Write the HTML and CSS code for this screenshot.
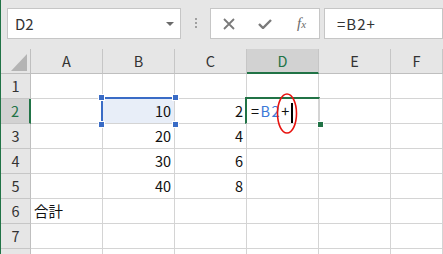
FILE: index.html
```html
<!DOCTYPE html>
<html lang="ja">
<head>
    <meta charset="UTF-8">
    <title>Excel - 合計</title>
    <link rel="stylesheet" href="styles.css">
</head>
<body>
    <div class="app">
        <!-- 数式バー -->
        <div class="toolbar">
            <div class="name-box">
                <span>D2</span>
                <span class="drop-arrow"></span>
            </div>
            <div class="grip"><i></i><i></i><i></i></div>
            <div class="buttons">
                <svg width="12" height="12" viewBox="0 0 12 12"><path d="M1 1 L11 11 M11 1 L1 11" stroke="#7a7a7a" stroke-width="1.8" fill="none"/></svg>
                <svg width="14" height="10" viewBox="0 0 14 10"><path d="M1 5 L5 9 L13 1" stroke="#7a7a7a" stroke-width="2.4" fill="none"/></svg>
                <span class="fx">f<small>x</small></span>
            </div>
            <div class="formula">=B2+</div>
        </div>

        <!-- シート -->
        <div class="sheet">
            <div class="corner"><span class="tri"></span></div>
            <div class="col-head">A</div>
            <div class="col-head">B</div>
            <div class="col-head">C</div>
            <div class="col-head active">D</div>
            <div class="col-head">E</div>
            <div class="col-head">F</div>

            <div class="row-head">1</div>
            <div class="cell"></div><div class="cell"></div><div class="cell"></div><div class="cell"></div><div class="cell"></div><div class="cell"></div>

            <div class="row-head active">2</div>
            <div class="cell"></div>
            <div class="cell num ref">10</div>
            <div class="cell num">2</div>
            <div class="cell edit">=<span class="ref-text">B2</span>+<span class="caret"></span></div>
            <div class="cell"></div><div class="cell"></div>

            <div class="row-head">3</div>
            <div class="cell"></div>
            <div class="cell num">20</div>
            <div class="cell num">4</div>
            <div class="cell"></div><div class="cell"></div><div class="cell"></div>

            <div class="row-head">4</div>
            <div class="cell"></div>
            <div class="cell num">30</div>
            <div class="cell num">6</div>
            <div class="cell"></div><div class="cell"></div><div class="cell"></div>

            <div class="row-head">5</div>
            <div class="cell"></div>
            <div class="cell num">40</div>
            <div class="cell num">8</div>
            <div class="cell"></div><div class="cell"></div><div class="cell"></div>

            <div class="row-head">6</div>
            <div class="cell">合計</div>
            <div class="cell"></div><div class="cell"></div><div class="cell"></div><div class="cell"></div><div class="cell"></div>

            <div class="row-head">7</div>
            <div class="cell"></div><div class="cell"></div><div class="cell"></div><div class="cell"></div><div class="cell"></div><div class="cell"></div>

            <!-- 8行目は上端だけ見える -->
            <div class="row-head"></div>
            <div class="cell"></div><div class="cell"></div><div class="cell"></div><div class="cell"></div><div class="cell"></div><div class="cell"></div>

            <!-- 参照範囲と選択セル -->
            <div class="ref-box">
                <i class="h tl"></i><i class="h tr"></i><i class="h bl"></i><i class="h br"></i>
            </div>
            <div class="sel-box"><i class="fill"></i></div>
            <svg class="mark" width="24" height="42" viewBox="0 0 24 42">
                <ellipse cx="11" cy="20.5" rx="9.5" ry="19.5" stroke="#e8130f" stroke-width="1.6" fill="none"/>
            </svg>
        </div>
    </div>
</body>
</html>
```

FILE: styles.css
```css
body {
    margin: 0;
    background: #fff;
    font-family: "Noto Sans CJK JP", "Noto Sans", sans-serif;
    overflow: hidden;
}

.app {
    width: 442px;
    height: 254px;
    border-left: 1px solid #217346;
    overflow: hidden;
}

.toolbar {
    display: flex;
    align-items: flex-start;
    height: 49px;
    box-sizing: border-box;
    padding: 8px 0 0 6px;
    background: #e6e6e6;
}

.name-box, .buttons, .formula {
    height: 31px;
    box-sizing: border-box;
    background: #fff;
    border: 1px solid #c6c6c6;
    display: flex;
    align-items: center;
}

.name-box {
    width: 174px;
    padding: 0 6px 0 7px;
    justify-content: space-between;
    font-size: 15px;
    color: #333;
}

.drop-arrow {
    width: 0;
    height: 0;
    border-left: 4px solid transparent;
    border-right: 4px solid transparent;
    border-top: 4px solid #6a6a6a;
    margin-top: 1px;
}

.grip {
    display: flex;
    flex-direction: column;
    gap: 2px;
    margin: 10px 13px 0 14px;
}

.grip i {
    display: block;
    width: 2px;
    height: 2px;
    background: #a0a0a0;
}

.buttons {
    width: 110px;
    padding: 0 0 0 12px;
    gap: 23px;
}

.fx {
    font-family: "Liberation Serif", serif;
    font-style: italic;
    font-size: 15px;
    color: #6a6a6a;
    margin-left: 2px;
}

.fx small {
    font-size: 11px;
}

.formula {
    flex: 1;
    margin-left: 4px;
    padding-left: 12px;
    font-size: 15px;
    letter-spacing: 1px;
    color: #333;
}

.sheet {
    position: relative;
    display: grid;
    grid-template-columns: 30px repeat(5, 72px) 1fr;
    grid-auto-rows: 25px;
    font-size: 14.5px;
}

.sheet > div {
    box-sizing: border-box;
    border-right: 1px solid #d4d4d4;
    border-bottom: 1px solid #d4d4d4;
    line-height: 24px;
    white-space: nowrap;
}

.corner {
    background: #e6e6e6;
    position: relative;
    border-color: #bfbfbf !important;
}

.tri {
    position: absolute;
    right: 3px;
    bottom: 2px;
    width: 0;
    height: 0;
    border-left: 16px solid transparent;
    border-bottom: 17px solid #b4b4b4;
}

.col-head {
    background: #e6e6e6;
    text-align: center;
    color: #333;
    border-right-color: #c6c6c6 !important;
    border-bottom-color: #bfbfbf !important;
}

.col-head.active {
    background: #d2d2d2;
    color: #217346;
    border-bottom: 2px solid #217346 !important;
}

.row-head {
    background: #e6e6e6;
    text-align: center;
    color: #333;
    border-right-color: #bfbfbf !important;
    border-bottom-color: #c6c6c6 !important;
}

.row-head.active {
    background: #d2d2d2;
    color: #217346;
    border-right: 2px solid #217346 !important;
}

.cell {
    padding: 0 3px;
    color: #111;
}

.num {
    text-align: right;
}

.ref {
    background: #e8eef8;
}

.edit {
    padding-left: 4px;
    display: flex;
    align-items: center;
    letter-spacing: 1.5px;
}

.ref-text {
    color: #3c78d8;
}

.caret {
    display: inline-block;
    width: 2px;
    height: 20px;
    margin-top: 4px;
    background: #000;
}

.ref-box {
    position: absolute;
    left: 100px;
    top: 48px;
    width: 74px;
    height: 27px;
    box-sizing: border-box;
    border: 2px solid #3a6cc6;
}

.h {
    position: absolute;
    width: 5px;
    height: 5px;
    background: #3a6cc6;
    outline: 1px solid #fff;
}

.tl { left: -4px; top: -4px; }
.tr { right: -4px; top: -4px; }
.bl { left: -4px; bottom: -4px; }
.br { right: -4px; bottom: -4px; }

.sel-box {
    position: absolute;
    left: 244px;
    top: 48px;
    width: 75px;
    height: 27px;
    box-sizing: border-box;
    border: 2px solid #217346;
}

.fill {
    position: absolute;
    right: -4px;
    bottom: -4px;
    width: 5px;
    height: 5px;
    background: #217346;
    outline: 1px solid #fff;
}

.mark {
    position: absolute;
    left: 275px;
    top: 44px;
}
```
